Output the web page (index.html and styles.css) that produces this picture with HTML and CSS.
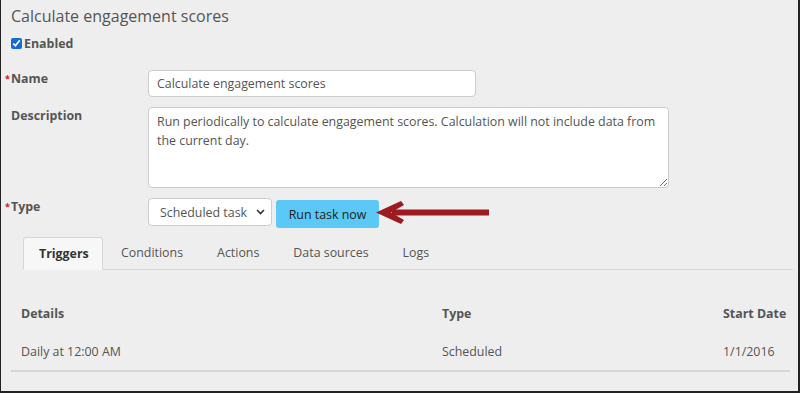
FILE: index.html
```html
<!DOCTYPE html>
<html>
<head>
<meta charset="utf-8">
<link rel="stylesheet" href="styles.css">
</head>
<body>
<div class="frame">
  <h1 class="title">Calculate engagement scores</h1>
  <label class="enabled"><input type="checkbox" checked> Enabled</label>

  <div class="row row-name">
    <div class="label req">Name</div>
    <div class="field"><input class="text" type="text" value="Calculate engagement scores"></div>
  </div>
  <div class="row row-desc">
    <div class="label">Description</div>
    <div class="field"><textarea class="area">Run periodically to calculate engagement scores. Calculation will not include data from the current day.</textarea></div>
  </div>
  <div class="row row-type">
    <div class="label req">Type</div>
    <div class="field type-field">
      <span class="select-wrap">
        <select class="select"><option>Scheduled task</option></select>
        <svg class="chev" width="9" height="6" viewBox="0 0 9 6"><path d="M1 1 L4.5 4.5 L8 1" fill="none" stroke="#333" stroke-width="1.6"/></svg>
      </span>
      <button class="run">Run task now</button>
      <svg class="arrow" width="114" height="28" viewBox="0 0 114 28">
        <rect x="16" y="10.5" width="97" height="6" fill="#9c1a20"/>
        <path d="M0 13.5 L25 2 L28 6 L15 13.5 L28 21 L25 25 Z" fill="#9c1a20"/>
      </svg>
    </div>
  </div>

  <div class="tabs">
    <div class="tab active">Triggers</div>
    <div class="tab">Conditions</div>
    <div class="tab">Actions</div>
    <div class="tab">Data sources</div>
    <div class="tab">Logs</div>
  </div>

  <div class="table">
    <div class="thead">
      <div class="c1">Details</div>
      <div class="c2">Type</div>
      <div class="c3">Start Date</div>
    </div>
    <div class="trow">
      <div class="c1">Daily at 12:00 AM</div>
      <div class="c2">Scheduled</div>
      <div class="c3">1/1/2016</div>
    </div>
  </div>
</div>
</body>
</html>
```

FILE: styles.css
```css
* { box-sizing: border-box; }
html, body { margin: 0; padding: 0; }
body {
  font-family: "Open Sans", "Noto Sans", sans-serif;
  background: #eeeeee;
  color: #555;
  width: 800px;
  height: 393px;
  overflow: hidden;
}
.frame {
  height: 393px;
  border-left: 1px solid #222;
  border-right: 2px solid #222;
  border-bottom: 2px solid #222;
  padding: 4px 0 0 10px;
}
.title {
  margin: 0;
  font-weight: 400;
  font-size: 16px;
  line-height: 24px;
  color: #555;
}
.enabled {
  display: flex;
  align-items: center;
  gap: 2px;
  margin-top: 7px;
  font-size: 12.4px;
  font-weight: 700;
  color: #555;
  height: 16px;
}
.enabled input {
  margin: 0;
  width: 11px;
  height: 11px;
  accent-color: #1769d6;
}
.row {
  display: grid;
  grid-template-columns: 137px 1fr;
}
.row-name { margin-top: 19px; }
.row-desc { margin-top: 10px; }
.row-type { margin-top: 10px; }
.label {
  font-size: 12.4px;
  font-weight: 700;
  color: #555;
  line-height: 17px;
  position: relative;
}
.req::before {
  content: "*";
  color: #d0161b;
  position: absolute;
  left: -6px;
  top: 0px;
  font-size: 9px;
  font-weight: 700;
}
.text {
  width: 328px;
  height: 27px;
  border: 1px solid #ccc;
  border-radius: 4px;
  background: #fff;
  font: 12.4px "Open Sans", sans-serif;
  color: #555;
  padding: 0 8px;
  display: block;
}
.area {
  width: 521px;
  height: 81px;
  border: 1px solid #ccc;
  border-radius: 4px;
  background: #fff;
  font: 12.4px/19px "Open Sans", sans-serif;
  color: #555;
  padding: 4px 8px;
  resize: both;
  display: block;
}
.type-field {
  display: flex;
  align-items: flex-start;
}
.select-wrap { position: relative; display: block; }
.select {
  appearance: none;
  -webkit-appearance: none;
  width: 124px;
  height: 28px;
  border: 1px solid #ccc;
  border-radius: 4px;
  background: #fff;
  font: 12.4px "Open Sans", sans-serif;
  color: #555;
  padding: 0 0 0 11px;
  display: block;
}
.chev {
  position: absolute;
  right: 7px;
  top: 11px;
}
.run {
  margin: 2px 0 0 4px;
  height: 28px;
  width: 103px;
  border: none;
  border-radius: 3px;
  background: #5bc8f5;
  color: #222;
  font: 12.4px "Open Sans", sans-serif;
  padding: 0;
}
.arrow { margin-top: 1px; margin-left: -3px; }

.tabs {
  display: flex;
  margin: 9px 5px 0 12px;
  border-bottom: 1px solid #d6d6d6;
  height: 33px;
}
.tab {
  font-size: 12.4px;
  color: #555;
  padding: 0 16px 0 16px;
  line-height: 32px;
  margin-right: 2px;
  white-space: nowrap;
}
.active {
  background: #f7f7f7;
  border: 1px solid #d6d6d6;
  border-bottom: 1px solid #f7f7f7;
  font-weight: 700;
  color: #333;
  height: 33px;
  line-height: 31px;
  border-radius: 3px 3px 0 0;
  width: 80px;
  padding: 0 0 0 15px;
  margin-right: 2px;
}
.table {
  margin: 34px 8px 0 0;
  font-size: 12.4px;
  color: #555;
}
.thead, .trow {
  display: grid;
  grid-template-columns: 421px 281px 1fr;
  padding-left: 10px;
  line-height: 20px;
  white-space: nowrap;
}
.thead { font-weight: 700; }
.trow {
  margin-top: 18px;
  padding-bottom: 8px;
  border-bottom: 2px solid #d6d6d6;
}
```
